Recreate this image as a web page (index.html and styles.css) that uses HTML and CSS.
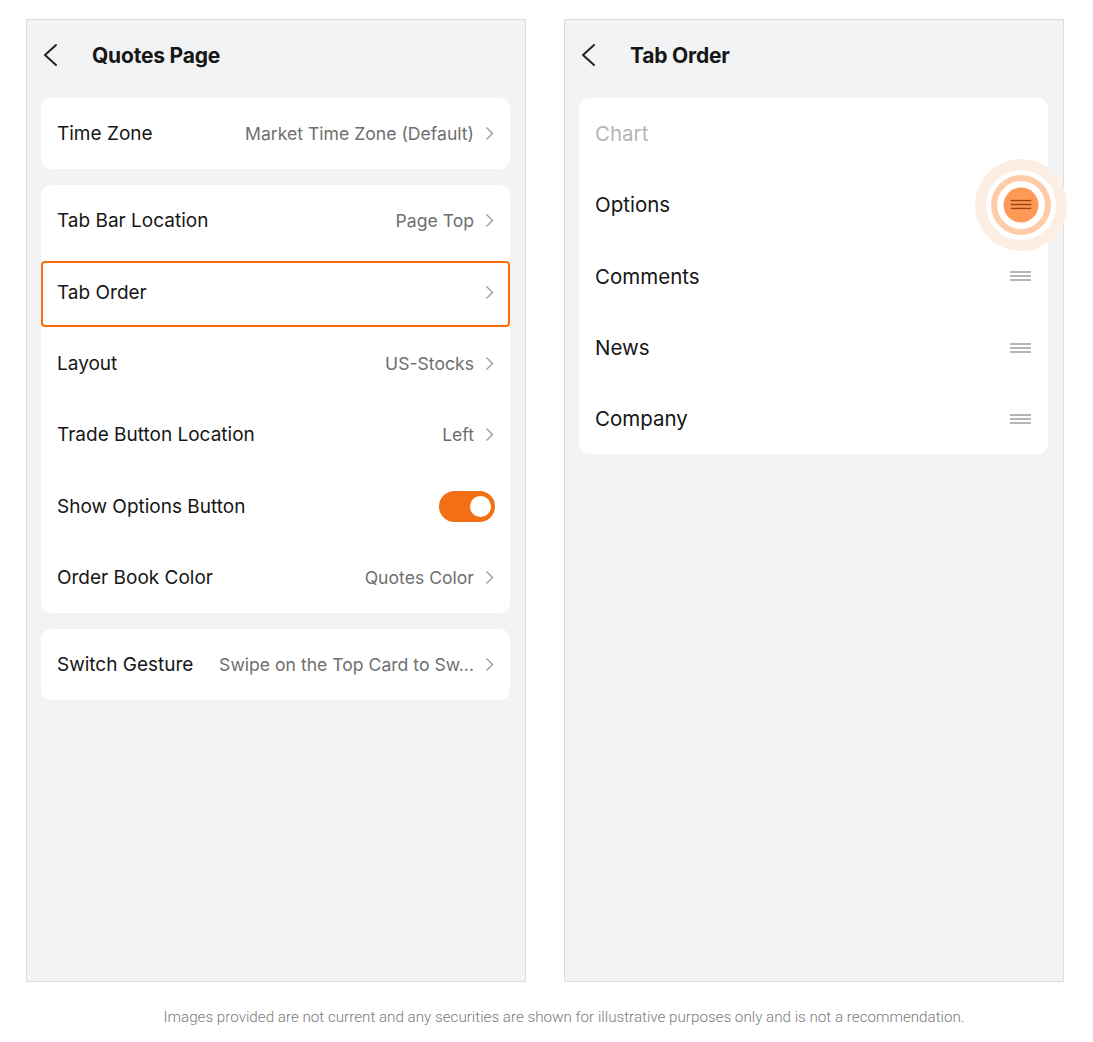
FILE: index.html
```html
<!DOCTYPE html>
<html lang="en">

<head>
   <meta charset="UTF-8">
   <meta name="viewport" content="width=device-width, initial-scale=1.0">
   <link rel="stylesheet" href="styles.css">
</head>

<body>
   <div class="screens">
      <div class="phone">
         <div class="topbar">
            <svg class="back" width="16" height="24" viewBox="0 0 16 24">
               <path d="M14 2 L3 12 L14 22" fill="none" stroke="#222" stroke-width="2" stroke-linecap="round" stroke-linejoin="round" />
            </svg>
            <span class="title">Quotes Page</span>
         </div>

         <div class="card">
            <div class="row">
               <span class="label">Time Zone</span>
               <span class="value">Market Time Zone (Default)</span>
               <svg class="arrow" width="9" height="15" viewBox="0 0 9 15"><path d="M1.5 1.5 L7.5 7.5 L1.5 13.5" fill="none" stroke="#9b9b9b" stroke-width="1.4" /></svg>
            </div>
         </div>

         <div class="card">
            <div class="row">
               <span class="label">Tab Bar Location</span>
               <span class="value">Page Top</span>
               <svg class="arrow" width="9" height="15" viewBox="0 0 9 15"><path d="M1.5 1.5 L7.5 7.5 L1.5 13.5" fill="none" stroke="#9b9b9b" stroke-width="1.4" /></svg>
            </div>
            <div class="row selected">
               <span class="label">Tab Order</span>
               <span class="value"></span>
               <svg class="arrow" width="9" height="15" viewBox="0 0 9 15"><path d="M1.5 1.5 L7.5 7.5 L1.5 13.5" fill="none" stroke="#9b9b9b" stroke-width="1.4" /></svg>
            </div>
            <div class="row">
               <span class="label">Layout</span>
               <span class="value">US-Stocks</span>
               <svg class="arrow" width="9" height="15" viewBox="0 0 9 15"><path d="M1.5 1.5 L7.5 7.5 L1.5 13.5" fill="none" stroke="#9b9b9b" stroke-width="1.4" /></svg>
            </div>
            <div class="row">
               <span class="label">Trade Button Location</span>
               <span class="value">Left</span>
               <svg class="arrow" width="9" height="15" viewBox="0 0 9 15"><path d="M1.5 1.5 L7.5 7.5 L1.5 13.5" fill="none" stroke="#9b9b9b" stroke-width="1.4" /></svg>
            </div>
            <div class="row">
               <span class="label">Show Options Button</span>
               <span class="toggle"><span class="knob"></span></span>
            </div>
            <div class="row">
               <span class="label">Order Book Color</span>
               <span class="value">Quotes Color</span>
               <svg class="arrow" width="9" height="15" viewBox="0 0 9 15"><path d="M1.5 1.5 L7.5 7.5 L1.5 13.5" fill="none" stroke="#9b9b9b" stroke-width="1.4" /></svg>
            </div>
         </div>

         <div class="card">
            <div class="row">
               <span class="label">Switch Gesture</span>
               <span class="value">Swipe on the Top Card to Sw...</span>
               <svg class="arrow" width="9" height="15" viewBox="0 0 9 15"><path d="M1.5 1.5 L7.5 7.5 L1.5 13.5" fill="none" stroke="#9b9b9b" stroke-width="1.4" /></svg>
            </div>
         </div>
      </div>

      <div class="phone">
         <div class="topbar">
            <svg class="back" width="16" height="24" viewBox="0 0 16 24">
               <path d="M14 2 L3 12 L14 22" fill="none" stroke="#222" stroke-width="2" stroke-linecap="round" stroke-linejoin="round" />
            </svg>
            <span class="title">Tab Order</span>
         </div>

         <div class="card">
            <div class="row tab-row">
               <span class="label muted">Chart</span>
            </div>
            <div class="row tab-row">
               <span class="label">Options</span>
               <span class="drag active">
                  <span class="ring-outer"></span>
                  <span class="ring-mid"></span>
                  <span class="dot">
                     <svg width="21" height="10" viewBox="0 0 21 10"><path d="M0 1 H21 M0 5 H21 M0 9 H21" stroke="#9b4512" stroke-width="1.4" /></svg>
                  </span>
               </span>
            </div>
            <div class="row tab-row">
               <span class="label">Comments</span>
               <span class="drag">
                  <svg width="21" height="10" viewBox="0 0 21 10"><path d="M0 1 H21 M0 5 H21 M0 9 H21" stroke="#9d9d9d" stroke-width="1.4" /></svg>
               </span>
            </div>
            <div class="row tab-row">
               <span class="label">News</span>
               <span class="drag">
                  <svg width="21" height="10" viewBox="0 0 21 10"><path d="M0 1 H21 M0 5 H21 M0 9 H21" stroke="#9d9d9d" stroke-width="1.4" /></svg>
               </span>
            </div>
            <div class="row tab-row">
               <span class="label">Company</span>
               <span class="drag">
                  <svg width="21" height="10" viewBox="0 0 21 10"><path d="M0 1 H21 M0 5 H21 M0 9 H21" stroke="#9d9d9d" stroke-width="1.4" /></svg>
               </span>
            </div>
         </div>
      </div>
   </div>

   <p class="disclaimer">
      Images provided are not current and any securities are shown for illustrative purposes only and is not a recommendation.
   </p>
</body>

</html>
```

FILE: styles.css
```css
body {
   margin: 0;
   background-color: #ffffff;
   font-family: Inter, "Noto Sans", sans-serif;
   color: #161616;
}

.screens {
   display: flex;
   gap: 38px;
   padding: 19px 0 0 26px;
}

.phone {
   width: 498px;
   height: 961px;
   border: 1px solid #dcdcdc;
   background-color: #f2f3f5;
   display: flex;
   flex-direction: column;
}

.phone > .card {
   margin: 0 15px 16px 14px;
}

.topbar {
   height: 70px;
   margin-bottom: 8px;
   display: flex;
   align-items: center;
   padding-left: 15px;
}

.back {
   margin-right: 34px;
}

.title {
   font-size: 21px;
   font-weight: 700;
   letter-spacing: -0.2px;
}

.card {
   background-color: #ffffff;
   border-radius: 10px;
}

.row {
   position: relative;
   height: 71.3px;
   display: flex;
   align-items: center;
   padding: 0 16px;
   font-size: 19px;
}

.label {
   flex: 1;
   white-space: nowrap;
}

.muted {
   color: #b5b5b5;
}

.value {
   color: #6e6e6e;
   font-size: 17.6px;
   margin-left: 18px;
   white-space: nowrap;
}

.arrow {
   margin-left: 11px;
}

.selected::after {
   content: "";
   position: absolute;
   left: 0;
   right: 0;
   top: 4px;
   bottom: 1px;
   border: 2px solid #ff6a0c;
   border-radius: 4px;
}

.toggle {
   width: 56px;
   height: 31px;
   margin-right: -1px;
   border-radius: 16px;
   background-color: #f26f16;
   position: relative;
}

.knob {
   position: absolute;
   right: 4px;
   top: 5px;
   width: 21px;
   height: 21px;
   border-radius: 50%;
   background-color: #ffffff;
}

.tab-row {
   padding-right: 17px;
   font-size: 20.5px;
}

.drag {
   position: relative;
   width: 21px;
   height: 10px;
   display: flex;
}

.drag.active .dot,
.drag.active .ring-mid,
.drag.active .ring-outer {
   position: absolute;
   left: 50%;
   top: 50%;
   border-radius: 50%;
   transform: translate(-50%, -50%);
}

.ring-outer {
   width: 92px;
   height: 92px;
   background-color: #ffffff;
   box-shadow: inset 0 0 0 11px #fdeee4, inset 0 0 0 17px #ffffff;
}

.ring-mid {
   width: 60px;
   height: 60px;
   background-color: #ffffff;
   box-shadow: inset 0 0 0 6px #ffcca9;
}

.dot {
   width: 35px;
   height: 35px;
   background-color: #ff9a56;
   display: flex;
   align-items: center;
   justify-content: center;
}

.disclaimer {
   margin: 26px 0 0 0;
   padding-left: 35px;
   text-align: center;
   font-family: Roboto, "Liberation Sans", sans-serif;
   font-weight: 300;
   font-size: 15.2px;
   color: #7b7b7b;
}
```
